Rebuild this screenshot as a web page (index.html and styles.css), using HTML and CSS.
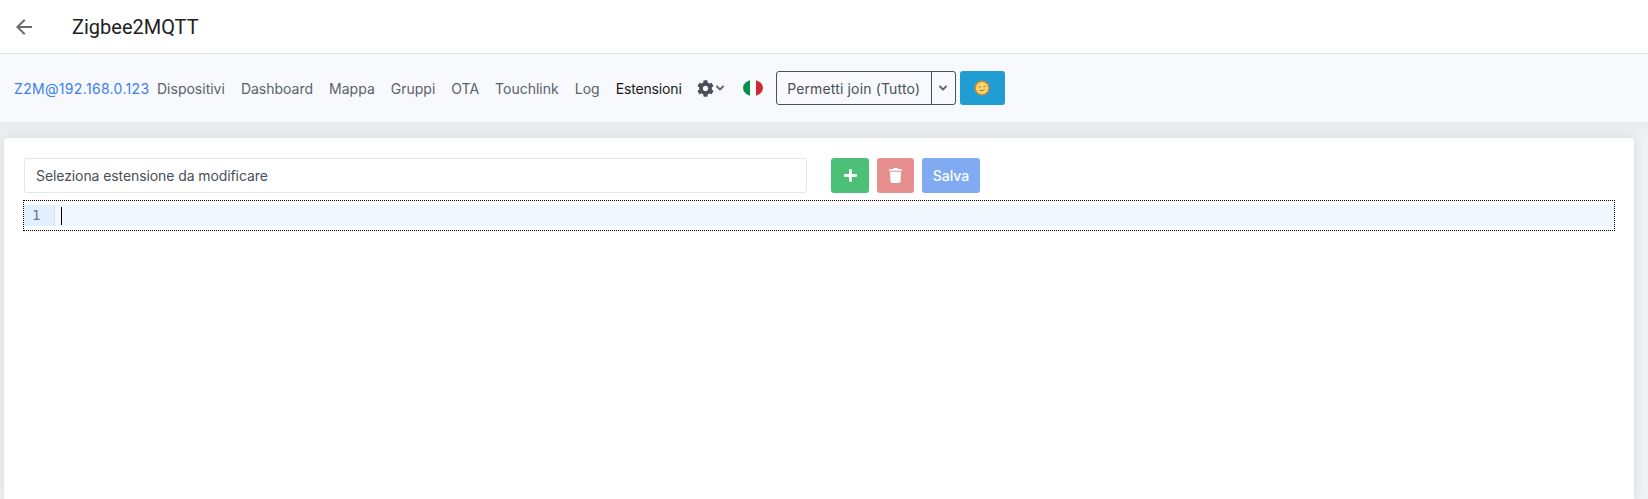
FILE: index.html
```html
<!DOCTYPE html>
<html lang="it">
<head>
<meta charset="utf-8">
<title>Zigbee2MQTT</title>
<link rel="stylesheet" href="styles.css">
</head>
<body>
<header class="topbar">
  <svg class="back" viewBox="0 0 24 24"><path d="M20 11H7.83l5.59-5.59L12 4l-8 8 8 8 1.41-1.41L7.83 13H20v-2z"/></svg>
  <h1 class="title">Zigbee2MQTT</h1>
</header>
<nav class="navbar">
  <a class="brand">Z2M@192.168.0.123</a>
  <ul class="links">
    <li class="link">Dispositivi</li>
    <li class="link">Dashboard</li>
    <li class="link">Mappa</li>
    <li class="link">Gruppi</li>
    <li class="link">OTA</li>
    <li class="link">Touchlink</li>
    <li class="link">Log</li>
    <li class="link active">Estensioni</li>
  </ul>
  <div class="settings">
    <svg class="cog" viewBox="0 0 512 512"><path d="M487.4 315.7l-42.6-24.6c4.3-23.2 4.3-47 0-70.2l42.6-24.6c4.9-2.8 7.1-8.6 5.5-14-11.1-35.6-30-67.8-54.7-94.6-3.8-4.1-10-5.1-14.8-2.3L380.8 110c-17.9-15.4-38.5-27.3-60.8-35.1V25.8c0-5.6-3.9-10.5-9.4-11.7-36.7-8.2-74.3-7.8-109.2 0-5.5 1.2-9.4 6.1-9.4 11.7V75c-22.2 7.9-42.8 19.8-60.8 35.1L88.7 85.5c-4.9-2.8-11-1.9-14.8 2.3-24.7 26.7-43.6 58.9-54.7 94.6-1.7 5.4.6 11.2 5.5 14L67.3 221c-4.3 23.2-4.3 47 0 70.2l-42.6 24.6c-4.9 2.8-7.1 8.6-5.5 14 11.1 35.6 30 67.8 54.7 94.6 3.8 4.1 10 5.1 14.8 2.3l42.6-24.6c17.9 15.4 38.5 27.3 60.8 35.1v49.2c0 5.6 3.9 10.5 9.4 11.7 36.7 8.2 74.3 7.8 109.2 0 5.5-1.2 9.4-6.1 9.4-11.7v-49.2c22.2-7.9 42.8-19.8 60.8-35.1l42.6 24.6c4.9 2.8 11 1.9 14.8-2.3 24.7-26.7 43.6-58.9 54.7-94.6 1.5-5.5-.7-11.3-5.6-14.1zM256 336c-44.1 0-80-35.9-80-80s35.9-80 80-80 80 35.9 80 80-35.9 80-80 80z"/></svg>
    <svg class="chev" viewBox="0 0 448 512"><path d="M207.029 381.476L12.686 187.132c-9.373-9.373-9.373-24.569 0-33.941l22.667-22.667c9.357-9.357 24.522-9.375 33.901-.04L224 284.505l154.745-154.021c9.379-9.335 24.544-9.317 33.901.04l22.667 22.667c9.373 9.373 9.373 24.569 0 33.941L240.971 381.476c-9.373 9.372-24.569 9.372-33.942 0z"/></svg>
  </div>
  <svg class="flag" viewBox="0 0 20 16">
    <defs><clipPath id="flagclip"><ellipse cx="10" cy="8" rx="10" ry="8"/></clipPath></defs>
    <g clip-path="url(#flagclip)">
      <rect x="0" width="7" height="16" fill="#009246"/>
      <rect x="7" width="6" height="16" fill="#fff"/>
      <rect x="13" width="7" height="16" fill="#ce2b37"/>
    </g>
  </svg>
  <div class="joingroup">
    <button class="joinmain">Permetti join (Tutto)</button>
    <button class="joinsplit"><svg class="chev" viewBox="0 0 448 512"><path d="M207.029 381.476L12.686 187.132c-9.373-9.373-9.373-24.569 0-33.941l22.667-22.667c9.357-9.357 24.522-9.375 33.901-.04L224 284.505l154.745-154.021c9.379-9.335 24.544-9.317 33.901.04l22.667 22.667c9.373 9.373 9.373 24.569 0 33.941L240.971 381.476c-9.373 9.372-24.569 9.372-33.942 0z"/></svg></button>
  </div>
  <button class="sunbtn">
    <svg class="sun" viewBox="0 0 16 16">
      <path fill="#f5881f" d="M8 0l1.7 1.7 2.3-.8.7 2.4 2.4.7-.8 2.3L16 8l-1.7 1.7.8 2.3-2.4.7-.7 2.4-2.3-.8L8 16l-1.7-1.7-2.3.8-.7-2.4-2.4-.7.8-2.3L0 8l1.7-1.7-.8-2.3 2.4-.7.7-2.4 2.3.8z"/>
      <circle cx="8" cy="8" r="6" fill="#ffd768"/>
      <path fill="none" stroke="#8a6420" stroke-width=".9" d="M4.6 6.6l2 .4M9.4 7l2-.8M5.2 10c1.6 1 3.8.9 5.6-.5"/>
    </svg>
  </button>
</nav>
<main class="page">
  <section class="card">
    <div class="toolbar">
      <div class="select">Seleziona estensione da modificare</div>
      <div class="actions">
        <button class="btn btn-add"><svg class="ico" viewBox="0 0 448 512"><path d="M416 208H272V64c0-17.67-14.33-32-32-32h-32c-17.67 0-32 14.33-32 32v144H32c-17.67 0-32 14.33-32 32v32c0 17.67 14.33 32 32 32h144v144c0 17.67 14.33 32 32 32h32c17.67 0 32-14.33 32-32V304h144c17.67 0 32-14.33 32-32v-32c0-17.67-14.33-32-32-32z"/></svg></button>
        <button class="btn btn-del"><svg class="ico" viewBox="0 0 448 512"><path d="M432 32H312l-9.4-18.7A24 24 0 0 0 281.1 0H166.8a23.72 23.72 0 0 0-21.4 13.3L136 32H16A16 16 0 0 0 0 48v32a16 16 0 0 0 16 16h416a16 16 0 0 0 16-16V48a16 16 0 0 0-16-16zM53.2 467a48 48 0 0 0 47.9 45h245.8a48 48 0 0 0 47.9-45L416 128H32z"/></svg></button>
        <button class="btn btn-save">Salva</button>
      </div>
    </div>
    <div class="editor">
      <div class="line">
        <span class="gutter">1</span>
        <span class="code"><span class="caret"></span></span>
      </div>
    </div>
  </section>
</main>
</body>
</html>
```
FILE: styles.css
```css
* { box-sizing: border-box; }
html, body { height: 100%; }
body {
  margin: 0;
  height: 499px;
  overflow: hidden;
  display: flex;
  flex-direction: column;
  font-family: Inter, "Liberation Sans", sans-serif;
  font-size: 14px;
  color: #495057;
  background: #f1f2f5;
}
.topbar {
  height: 54px;
  flex: none;
  background: #fff;
  border-bottom: 1px solid #dfe2e8;
  display: flex;
  align-items: center;
  padding-left: 12px;
}
.back { width: 24px; height: 24px; fill: #6b6b6b; }
.title {
  margin: 0 0 0 36px;
  font-family: Roboto, sans-serif;
  font-size: 20px;
  font-weight: 400;
  color: #202124;
}
.navbar {
  height: 68px;
  flex: none;
  background: #f7f9fc;
  display: flex;
  align-items: center;
  padding-left: 14px;
}
.brand {
  color: #3c7ff0;
  width: 135px;
  white-space: nowrap;
  letter-spacing: .33px;
}
.links {
  list-style: none;
  margin: 0;
  padding: 0;
  display: flex;
}
.link { padding: 0 8px; color: #5a6169; white-space: nowrap; }
.active { color: #16181b; letter-spacing: -.15px; }
.settings { display: flex; align-items: center; margin-left: 7px; gap: 2px; }
.cog { width: 17px; height: 17px; fill: #495057; }
.chev { width: 8px; height: 10px; fill: #555c63; stroke: #555c63; stroke-width: 30px; }
.flag { width: 20px; height: 16px; margin-left: 19px; }
.joingroup { display: flex; height: 34px; margin-left: 13px; }
.joinmain, .joinsplit {
  font: inherit;
  color: #495057;
  background: transparent;
  border: 1px solid #495057;
  height: 34px;
}
.joinmain { width: 156px; padding: 0; border-radius: 3px 0 0 3px; letter-spacing: .15px; }
.joinsplit {
  width: 25px;
  margin-left: -1px;
  padding: 0;
  border-radius: 0 3px 3px 0;
  display: flex;
  align-items: center;
  justify-content: center;
}
.sunbtn {
  width: 45px;
  height: 34px;
  margin-left: 4px;
  background: #209dd2;
  border: 0;
  border-radius: 3px;
  padding: 0;
  display: flex;
  align-items: center;
  justify-content: center;
}
.sun { width: 16px; height: 16px; }
.page {
  flex: 1;
  min-height: 0;
  padding: 16px 14px 0 4px;
  background: linear-gradient(#e8eaee, #f1f2f5 20px);
}
.card {
  height: 100%;
  background: #fff;
  border-radius: 4px 4px 0 0;
  padding: 20px 19px 0 19px;
  box-shadow: 0 0 12px rgba(120, 125, 145, .22);
}
.toolbar { display: flex; height: 35px; }
.select {
  width: 783px;
  height: 35px;
  margin-left: 1px;
  border: 1px solid #e1e7ee;
  border-radius: 3px;
  padding-left: 11px;
  display: flex;
  align-items: center;
  color: #495057;
  letter-spacing: -.09px;
}
.actions { display: flex; margin-left: 24px; gap: 8px; }
.btn {
  height: 35px;
  border: 0;
  border-radius: 3px;
  padding: 0;
  color: #fff;
  font: inherit;
  font-weight: 500;
  display: flex;
  align-items: center;
  justify-content: center;
}
.btn-add { width: 38px; background: #4cc077; }
.btn-del { width: 37px; background: #e78f8f; }
.btn-save { width: 58px; background: #80abf2; }
.ico { width: 13px; height: 15px; fill: #fff; }
.editor {
  margin-top: 7px;
  height: 31px;
  border: 1px dotted #000;
  padding-top: 4px;
}
.line { display: flex; height: 21px; background: #f1f8ff; }
.gutter {
  width: 30px;
  padding-left: 8px;
  background: #e0f0ff;
  font-family: "DejaVu Sans Mono", monospace;
  font-size: 14px;
  line-height: 21px;
  color: #777;
}
.code {
  flex: 1;
  border-left: 1px solid #ddd;
  padding-left: 6px;
  display: flex;
  align-items: center;
}
.caret { width: 1px; height: 18px; background: #000; }
```
